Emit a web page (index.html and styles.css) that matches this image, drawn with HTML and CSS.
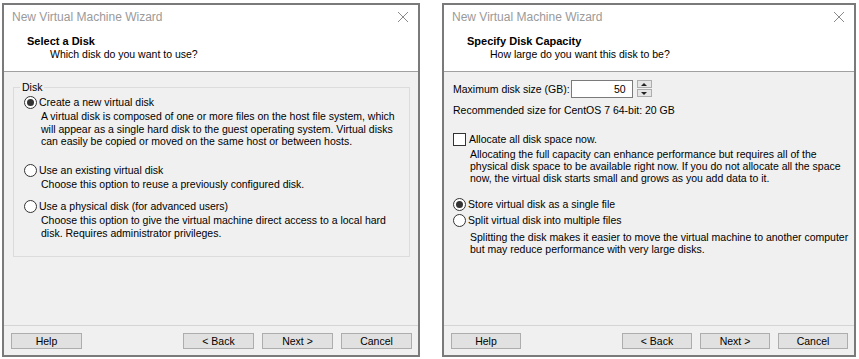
FILE: index.html
```html
<!DOCTYPE html>
<html lang="en">
  <head>
    <meta charset="UTF-8" />
    <title>New Virtual Machine Wizard</title>
    <link rel="stylesheet" href="styles.css">
  </head>
  <body>
    <div class="screen">
      <!-- Step: select a disk -->
      <div class="wizard wizard-left">
        <div class="titlebar">
          <span class="title">New Virtual Machine Wizard</span>
          <svg class="close" width="12" height="12" viewBox="0 0 12 12">
            <path d="M1 1 L11 11 M11 1 L1 11" stroke="#8a8a8a" stroke-width="1" fill="none" />
          </svg>
        </div>
        <div class="header">
          <div class="heading">Select a Disk</div>
          <div class="subheading">Which disk do you want to use?</div>
        </div>
        <div class="body">
          <fieldset class="group">
            <legend>Disk</legend>
            <div class="option first"><span class="radio checked"></span>Create a new virtual disk</div>
            <p class="desc">A virtual disk is composed of one or more files on the host file system, which<br>will appear as a single hard disk to the guest operating system. Virtual disks<br>can easily be copied or moved on the same host or between hosts.</p>
            <div class="option existing"><span class="radio"></span>Use an existing virtual disk</div>
            <p class="desc">Choose this option to reuse a previously configured disk.</p>
            <div class="option physical"><span class="radio"></span>Use a physical disk (for advanced users)</div>
            <p class="desc">Choose this option to give the virtual machine direct access to a local hard<br>disk. Requires administrator privileges.</p>
          </fieldset>
        </div>
        <div class="footer">
          <button class="btn">Help</button>
          <span class="spacer"></span>
          <button class="btn">&lt; Back</button>
          <button class="btn">Next &gt;</button>
          <button class="btn">Cancel</button>
        </div>
      </div>

      <!-- Step: disk capacity -->
      <div class="wizard wizard-right">
        <div class="titlebar">
          <span class="title">New Virtual Machine Wizard</span>
          <svg class="close" width="12" height="12" viewBox="0 0 12 12">
            <path d="M1 1 L11 11 M11 1 L1 11" stroke="#8a8a8a" stroke-width="1" fill="none" />
          </svg>
        </div>
        <div class="header">
          <div class="heading">Specify Disk Capacity</div>
          <div class="subheading">How large do you want this disk to be?</div>
        </div>
        <div class="body capacity">
          <div class="size-row">
            <span>Maximum disk size (GB):</span>
            <span class="numbox">50</span>
            <span class="spinner">
              <span class="spin-btn"><span class="arrow up"></span></span>
              <span class="spin-btn"><span class="arrow down"></span></span>
            </span>
          </div>
          <div class="recommended">Recommended size for CentOS 7 64-bit: 20 GB</div>
          <div class="option allocate"><span class="checkbox"></span>Allocate all disk space now.</div>
          <p class="desc">Allocating the full capacity can enhance performance but requires all of the<br>physical disk space to be available right now. If you do not allocate all the space<br>now, the virtual disk starts small and grows as you add data to it.</p>
          <div class="option single"><span class="radio checked"></span>Store virtual disk as a single file</div>
          <div class="option split"><span class="radio"></span>Split virtual disk into multiple files</div>
          <p class="desc">Splitting the disk makes it easier to move the virtual machine to another computer<br>but may reduce performance with very large disks.</p>
        </div>
        <div class="footer">
          <button class="btn">Help</button>
          <span class="spacer"></span>
          <button class="btn">&lt; Back</button>
          <button class="btn">Next &gt;</button>
          <button class="btn">Cancel</button>
        </div>
      </div>
    </div>
  </body>
</html>
```

FILE: styles.css
```css
* {
  box-sizing: border-box;
  margin: 0;
  padding: 0;
}

body {
  font-family: "Liberation Sans", Arial, sans-serif;
  font-size: 10.5px;
  color: #000000;
  background-color: #ffffff;
}

.screen {
  display: flex;
  gap: 22px;
  padding: 3px 0 0 2px;
}

.wizard {
  height: 354px;
  border: 2px solid #7a7a7a;
  display: flex;
  flex-direction: column;
  background-color: #f0f0f0;
}

.wizard-left {
  width: 418px;
}

.wizard-right {
  width: 414px;
}

.titlebar {
  height: 24px;
  padding: 0 9px 0 8px;
  display: flex;
  align-items: center;
  justify-content: space-between;
  background-color: #ffffff;
}

.title {
  font-size: 12px;
  color: #9a9a9a; /* inactive window title */
}

.header {
  background-color: #ffffff;
  padding: 6px 0 10px 23px;
  border-bottom: 1px solid #a0a0a0;
  line-height: 13px;
}

.heading {
  font-weight: bold;
  font-size: 11px;
}

.subheading {
  padding-left: 23px;
}

.body {
  flex: 1;
}

.group {
  margin: 9px 8px 0 9px;
  height: 176px;
  border: 1px solid #dcdcdc;
  padding: 0 0 0 10px;
}

.group legend {
  margin-left: -4px;
  padding: 0 2px;
  line-height: 13px;
}

.option {
  display: flex;
  align-items: center;
  height: 13px;
  line-height: 13px;
}

.option.first {
  margin-top: 2px;
}

.option.existing {
  margin-top: 16px;
}

.option.physical {
  margin-top: 10px;
}

.radio {
  width: 13px;
  height: 13px;
  border: 1px solid #333333;
  border-radius: 50%;
  background-color: #ffffff;
  margin-right: 2px;
  display: flex;
  align-items: center;
  justify-content: center;
  flex-shrink: 0;
}

.radio.checked:before {
  content: "";
  width: 7px;
  height: 7px;
  border-radius: 50%;
  background-color: #333333;
}

.checkbox {
  width: 13px;
  height: 13px;
  border: 1px solid #333333;
  background-color: #ffffff;
  margin-right: 3px;
  flex-shrink: 0;
}

.desc {
  padding-left: 17px;
  line-height: 12.5px;
  margin-top: 1px;
  white-space: nowrap;
}

.capacity {
  padding: 8px 9px 0 9px;
}

.capacity .desc {
  line-height: 12px;
}

.size-row {
  display: flex;
  align-items: center;
  height: 17px;
}

.numbox {
  width: 62px;
  height: 18px;
  margin-left: 1px;
  border: 1px solid #7a7a7a;
  background-color: #ffffff;
  text-align: right;
  padding-right: 6px;
  line-height: 16px;
}

.spinner {
  display: flex;
  flex-direction: column;
  gap: 1px;
  margin-left: 4px;
  width: 15px;
  height: 17px;
}

.spin-btn {
  flex: 1;
  border: 1px solid #adadad;
  background-color: #e5e5e5;
  display: flex;
  align-items: center;
  justify-content: center;
}

.arrow {
  width: 0;
  height: 0;
  border-left: 3px solid transparent;
  border-right: 3px solid transparent;
}

.arrow.up {
  border-bottom: 3px solid #222222;
}

.arrow.down {
  border-top: 3px solid #222222;
}

.recommended {
  margin-top: 7px;
  line-height: 13px;
}

.option.allocate {
  margin-top: 16px;
}

.option.allocate + .desc {
  margin-top: 2px;
}

.option.single {
  margin-top: 14px;
}

.option.split {
  margin-top: 3px;
}

.option.split + .desc {
  margin-top: 4px;
}

.footer {
  height: 30px;
  border-top: 1px solid #d4d4d4;
  display: flex;
  align-items: flex-start;
  gap: 8px;
  padding: 7px 6px 0 7px;
}

.spacer {
  flex: 1;
}

.btn {
  width: 71px;
  height: 16px;
  font-family: "Liberation Sans", Arial, sans-serif;
  font-size: 10.5px;
  line-height: 14px;
  color: #000000;
  background-color: #e1e1e1;
  border: 1px solid #adadad;
}

.wizard-right .btn {
  width: 70px;
}
```
